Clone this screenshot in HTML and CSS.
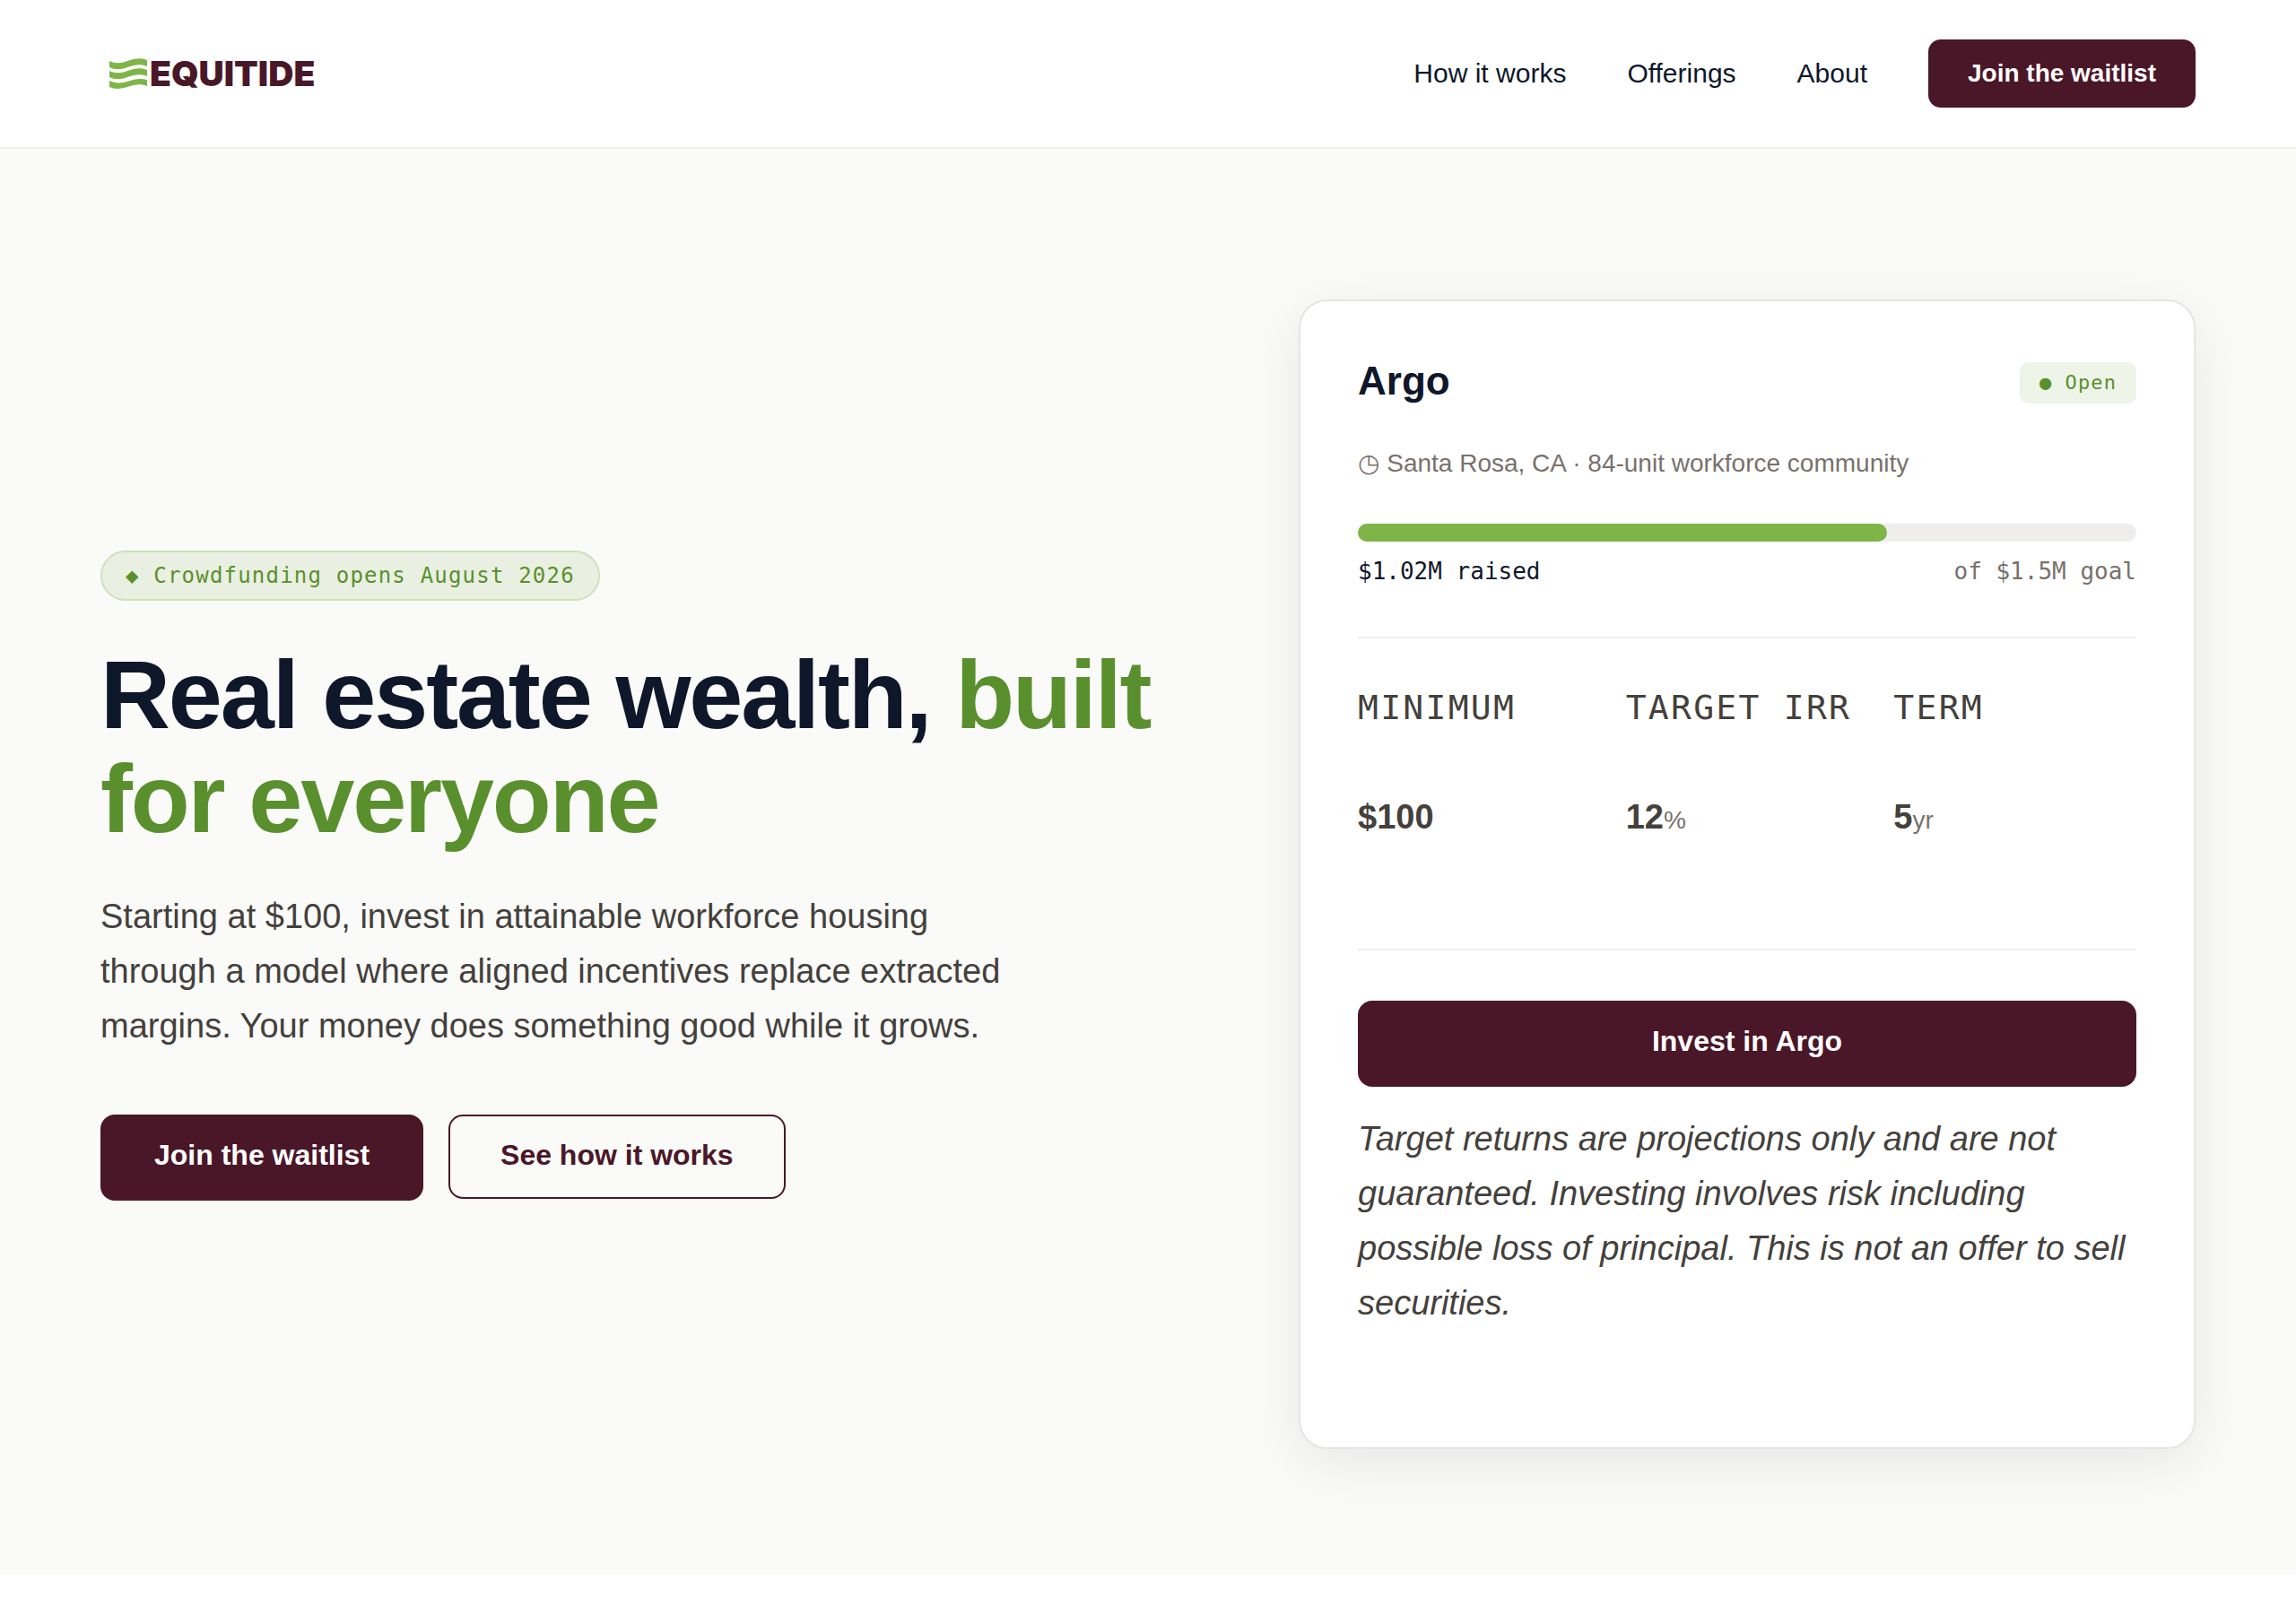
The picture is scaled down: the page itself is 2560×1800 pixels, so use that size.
FILE: index.html
```
<!DOCTYPE html>
<html lang="en">
<head>
  <meta charset="UTF-8">
  <meta name="viewport" content="width=device-width, initial-scale=1">
  <title>Equitide</title>
  <link rel="stylesheet" href="styles.css">
</head>
<body>

<header class="site-header">
  <a href="#" class="logo">
    <svg class="logo-mark" viewBox="0 0 42 34" aria-hidden="true">
      <path d="M0 3C6 6 13 6 20 3C28 0 35-1 42 2V9C35 6 28 7 20 10C13 13 6 13 0 10Z"/>
      <path d="M0 14C6 17 13 17 20 14C28 11 35 10 42 13V20C35 17 28 18 20 21C13 24 6 24 0 21Z"/>
      <path d="M0 25C6 28 13 28 20 26C28 23 35 22 42 24V31C35 28 28 29 20 32C13 34 6 35 0 32Z"/>
    </svg>
    <span class="logo-text">EQUITIDE</span>
  </a>
  <nav class="nav">
    <a href="#how">How it works</a>
    <a href="#offerings">Offerings</a>
    <a href="#about">About</a>
    <a href="#waitlist" class="btn btn-small">Join the waitlist</a>
  </nav>
</header>

<main class="hero">
  <section class="hero-copy">
    <div class="pill">◆ Crowdfunding opens August 2026</div>
    <h1>Real estate wealth, <span class="accent">built for everyone</span></h1>
    <p class="lead">Starting at $100, invest in attainable workforce housing through a model where aligned incentives replace extracted margins. Your money does something good while it grows.</p>
    <div class="actions">
      <a href="#waitlist" class="btn">Join the waitlist</a>
      <a href="#how" class="btn btn-outline">See how it works</a>
    </div>
  </section>

  <article class="card">
    <div class="card-head">
      <h2>Argo</h2>
      <span class="status">● Open</span>
    </div>
    <p class="location">◷ Santa Rosa, CA · 84-unit workforce community</p>

    <div class="progress">
      <div class="progress-fill" style="width: 68%"></div>
    </div>
    <div class="progress-labels">
      <span class="raised">$1.02M raised</span>
      <span>of $1.5M goal</span>
    </div>

    <dl class="metrics">
      <div>
        <dt>MINIMUM</dt>
        <dd>$100</dd>
      </div>
      <div>
        <dt>TARGET IRR</dt>
        <dd>12<small>%</small></dd>
      </div>
      <div>
        <dt>TERM</dt>
        <dd>5<small>yr</small></dd>
      </div>
    </dl>

    <button type="button" class="btn btn-block">Invest in Argo</button>
    <p class="disclaimer">Target returns are projections only and are not guaranteed. Investing involves risk including possible loss of principal. This is not an offer to sell securities.</p>
  </article>
</main>

</body>
</html>
```
FILE: styles.css
```
:root {
  --maroon: #4a1728;
  --green: #7fb547;
  --green-dark: #5a8f2d;
  --navy: #0f172a;
  --text: #44403c;
  --muted: #78716c;
  --line: #eeeeee;
  --mono: "DejaVu Sans Mono", monospace;
}

* {
  box-sizing: border-box;
}

body {
  margin: 0;
  background: #fff;
  color: var(--text);
  font-family: "Liberation Sans", "DejaVu Sans", sans-serif;
  font-size: 38px;
  line-height: 61px;
}

h1, h2, p, dl, dd {
  margin: 0;
}

a {
  text-decoration: none;
}

/* header */
.site-header {
  display: flex;
  align-items: center;
  justify-content: space-between;
  padding: 44px 112px;
  border-bottom: 2px solid var(--line);
}

.logo {
  display: flex;
  align-items: center;
  gap: 3px;
  margin-left: 10px;
  color: var(--maroon);
}

.logo-mark {
  width: 42px;
  height: 34px;
  fill: var(--green);
}

.logo-text {
  font-family: Inter, sans-serif;
  font-size: 39px;
  font-weight: 900;
  line-height: 38px;
}

.nav {
  display: flex;
  align-items: center;
  gap: 68px;
  font-size: 30px;
  line-height: 36px;
}

.nav a:not(.btn) {
  color: var(--navy);
}

/* buttons */
.btn {
  display: inline-block;
  padding: 26px 60px 32px;
  border: 0;
  border-radius: 16px;
  background: var(--maroon);
  color: #fff;
  font-family: inherit;
  font-size: 32px;
  font-weight: bold;
  line-height: 38px;
  text-align: center;
  cursor: pointer;
}

.btn-small {
  padding: 20px 44px;
  border-radius: 14px;
  font-size: 28px;
  line-height: 36px;
}

.btn-outline {
  padding: 24px 56px 28px;
  border: 2px solid var(--maroon);
  background: transparent;
  color: var(--maroon);
}

.btn-block {
  display: block;
  width: 100%;
}

/* hero */
.hero {
  display: grid;
  grid-template-columns: 6fr 5fr;
  gap: 136px;
  align-items: center;
  padding: 168px 112px 140px;
  background: #fafaf8;
}

.hero-copy {
  padding-top: 2px;
}

.pill {
  width: fit-content;
  padding: 6px 26px;
  border: 2px solid #cfe0b8;
  border-radius: 28px;
  background: #e9f0e1;
  color: var(--green-dark);
  font-family: var(--mono);
  font-size: 24px;
  letter-spacing: 0.05em;
  line-height: 40px;
}

h1 {
  margin-top: 47px;
  color: var(--navy);
  font-size: 108px;
  letter-spacing: -0.02em;
  line-height: 116px;
}

.accent {
  color: var(--green-dark);
}

.lead {
  max-width: 1040px;
  margin-top: 43px;
}

.actions {
  display: flex;
  align-items: flex-start;
  gap: 28px;
  margin-top: 68px;
}

/* offering card */
.card {
  padding: 64px 64px 130px;
  border: 2px solid #e5e5e5;
  border-radius: 32px;
  background: #fff;
  box-shadow: 0 16px 64px rgba(15, 23, 42, 0.08);
}

.card-head {
  display: flex;
  align-items: flex-end;
  justify-content: space-between;
}

h2 {
  color: var(--navy);
  font-size: 44px;
  line-height: 50px;
}

.status {
  padding: 5px 22px;
  border-radius: 10px;
  background: #eef4e8;
  color: var(--green-dark);
  font-family: var(--mono);
  font-size: 22px;
  letter-spacing: 0.05em;
  line-height: 36px;
}

.location {
  margin: 45px 0;
  color: var(--muted);
  font-size: 28px;
  line-height: 44px;
}

.progress {
  height: 20px;
  border-radius: 10px;
  background: #f0eeed;
}

.progress-fill {
  height: 100%;
  border-radius: 10px;
  background: var(--green);
}

.progress-labels {
  display: flex;
  justify-content: space-between;
  margin-top: 12px;
  color: var(--muted);
  font-family: var(--mono);
  font-size: 26px;
  line-height: 42px;
}

.raised {
  color: var(--navy);
}

.metrics {
  display: grid;
  grid-template-columns: repeat(3, 1fr);
  gap: 28px;
  margin: 52px 0 56px;
  padding: 47px 0 116px;
  border-top: 2px solid var(--line);
  border-bottom: 2px solid var(--line);
}

dt {
  font-family: var(--mono);
  letter-spacing: 0.06em;
  white-space: nowrap;
}

dd {
  margin-top: 61px;
  font-weight: bold;
}

dd small {
  color: var(--muted);
  font-size: 28px;
  font-weight: normal;
  line-height: 28px;
}

.disclaimer {
  margin-top: 28px;
  font-style: italic;
}
```
